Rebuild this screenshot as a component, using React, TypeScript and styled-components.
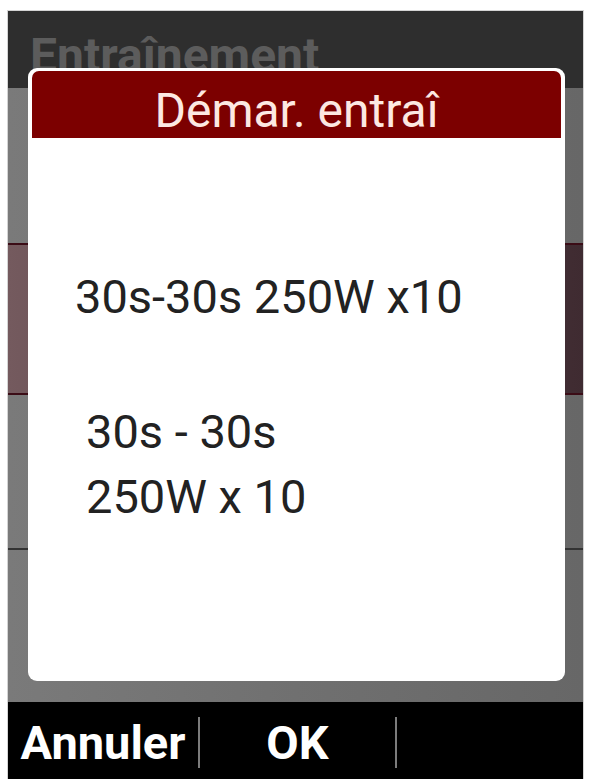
import React from "react";
import styled, { createGlobalStyle } from "styled-components";

const GlobalStyle = createGlobalStyle`
  html, body {
    margin: 0;
    padding: 0;
    background: #ffffff;
  }
  body {
    font-family: Roboto, "Noto Sans", "Liberation Sans", sans-serif;
  }
`;

const Device = styled.div`
  position: relative;
  width: 575px;
  height: 768px;
  margin: 11px 0 0 8px;
  display: flex;
  flex-direction: column;
  background: #2e2e2e;
  box-shadow: 0 0 0 1px #d4d4d4;
  overflow: hidden;
`;

const Header = styled.header`
  height: 77px;
  flex: none;
  box-sizing: border-box;
  padding: 17px 0 0 22px;
  background: #2e2e2e;
  color: #5c5c5c;
  font-size: 48px;
  font-weight: 700;
  line-height: 56px;
  white-space: nowrap;
`;

const List = styled.div`
  flex: 1;
  display: flex;
  flex-direction: column;
`;

const Row = styled.div<{ $highlight?: boolean; $h: number; $line?: string }>`
  height: ${(p) => p.$h}px;
  flex: none;
  box-sizing: border-box;
  border-top: ${(p) => (p.$line ? `2px solid ${p.$line}` : "none")};
  background: ${(p) =>
    p.$highlight
      ? "linear-gradient(90deg, #745a5e 0%, #5a4248 50%, #3f2b31 100%)"
      : "linear-gradient(90deg, #7a7a7a 0%, #707070 50%, #676767 100%)"};
`;

const BottomBar = styled.nav`
  height: 77px;
  flex: none;
  display: flex;
  align-items: stretch;
  background: #000000;
`;

const BarCell = styled.div<{ $w?: number }>`
  flex: ${(p) => (p.$w ? `0 0 ${p.$w}px` : "1")};
  box-sizing: border-box;
  padding-top: 5px;
  text-align: center;
  color: #ffffff;
  font-size: 47px;
  font-weight: 700;
  line-height: 72px;
  white-space: nowrap;
`;

const BarDivider = styled.span`
  flex: none;
  width: 2px;
  height: 51px;
  align-self: flex-start;
  margin-top: 15px;
  background: #7c7c7c;
`;

const Dialog = styled.div`
  position: absolute;
  left: 20px;
  top: 57px;
  width: 537px;
  height: 613px;
  box-sizing: border-box;
  padding: 3px 4px 0;
  background: #ffffff;
  border-radius: 9px;
  display: flex;
  flex-direction: column;
`;

const DialogTitle = styled.h1`
  margin: 0;
  height: 67px;
  flex: none;
  box-sizing: border-box;
  padding-top: 12px;
  background: #7c0000;
  border-radius: 7px 7px 0 0;
  color: #fde8e2;
  font-size: 48px;
  font-weight: 400;
  line-height: 55px;
  text-align: center;
  white-space: nowrap;
`;

const DialogBody = styled.div`
  display: flex;
  flex-direction: column;
  padding-top: 126px;
`;

const TextLine = styled.p<{ $indent: number; $gapTop?: number }>`
  margin: ${(p) => p.$gapTop ?? 0}px 0 0 ${(p) => p.$indent}px;
  color: #222222;
  font-size: 47px;
  font-weight: 400;
  line-height: 65px;
  white-space: nowrap;
`;

export default function App() {
  return (
    <>
      <GlobalStyle />
      <Device>
        <Header>Entraînement</Header>
        <List>
          <Row $h={155} />
          <Row $h={150} $highlight $line="#3b0c16" />
          <Row $h={155} $line="#3b0c16" />
          <Row $h={154} $line="#333333" />
        </List>
        <BottomBar>
          <BarCell $w={190}>Annuler</BarCell>
          <BarDivider />
          <BarCell $w={195}>OK</BarCell>
          <BarDivider />
          <BarCell />
        </BottomBar>
        <Dialog>
          <DialogTitle>Démar. entraî</DialogTitle>
          <DialogBody>
            <TextLine $indent={43}>30s-30s 250W x10</TextLine>
            <TextLine $indent={54} $gapTop={70}>
              30s - 30s
            </TextLine>
            <TextLine $indent={54}>250W x 10</TextLine>
          </DialogBody>
        </Dialog>
      </Device>
    </>
  );
}
